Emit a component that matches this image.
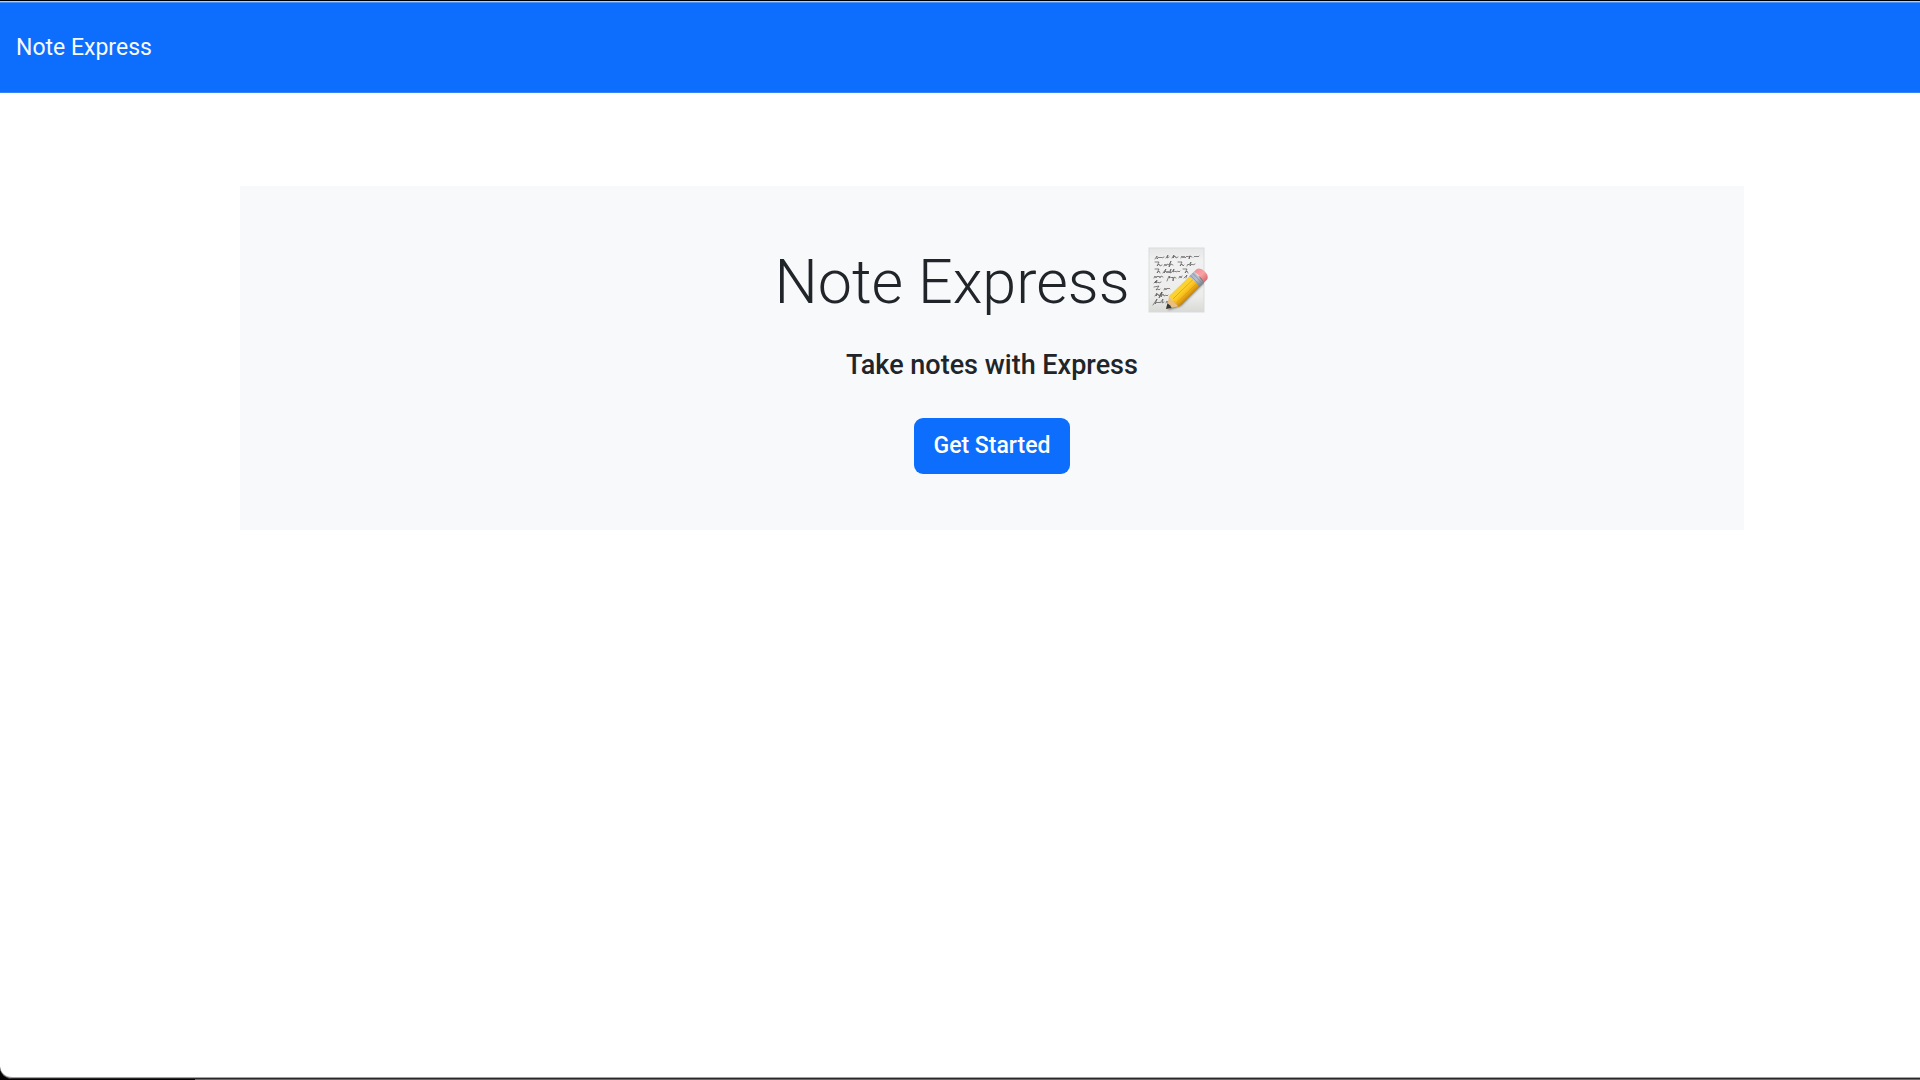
<svelte:head>
  <title>Note Express</title>
</svelte:head>

<div class="window">
  <div class="page">
    <header class="navbar">
      <nav aria-label="Main"><a class="brand" href="/">Note Express</a></nav>
    </header>
    <main>
      <section class="hero">
        <h1>
          <span>Note Express</span>
          <svg class="memo" viewBox="0 0 64 72" role="img" aria-label="Memo">
            <defs>
              <linearGradient id="paper" x1="0" y1="0" x2="0" y2="1">
                <stop offset="0" stop-color="#e6e6e6" />
                <stop offset=".2" stop-color="#f1f1f1" />
                <stop offset=".75" stop-color="#ececeb" />
                <stop offset="1" stop-color="#d9d9d6" />
              </linearGradient>
              <linearGradient id="barrel" x1="0" y1="0" x2="0" y2="1">
                <stop offset="0" stop-color="#f7cf3c" />
                <stop offset=".35" stop-color="#ffd42a" />
                <stop offset=".65" stop-color="#f5b81c" />
                <stop offset="1" stop-color="#c98609" />
              </linearGradient>
              <linearGradient id="metal" x1="0" y1="0" x2="0" y2="1">
                <stop offset="0" stop-color="#a9b6ca" />
                <stop offset=".5" stop-color="#b9c0ca" />
                <stop offset="1" stop-color="#7c8088" />
              </linearGradient>
              <linearGradient id="rubber" x1="0" y1="0" x2="0" y2="1">
                <stop offset="0" stop-color="#f48f96" />
                <stop offset=".5" stop-color="#f7a3a6" />
                <stop offset="1" stop-color="#d9686f" />
              </linearGradient>
              <filter id="shade" x="-20%" y="-50%" width="140%" height="200%">
                <feGaussianBlur stdDeviation="1.3" />
              </filter>
              <clipPath id="sheet"><rect x="3" y="4" width="55" height="64" /></clipPath>
            </defs>
            <rect x="3" y="4" width="55" height="64" fill="url(#paper)" stroke="#dadbdc" stroke-width="1" />
            <g fill="none" stroke="#555" stroke-width="0.7" stroke-linecap="round" stroke-linejoin="round">
              <path d="M9 15l2-3 0 3 2-2 1 1 1-1 1 1 2-1M20 14l2-3-1 3 2-1M26 14l2-3-1 3 2-2 1 2 2-1M35 14l1-2 1 2 1-2 1 2 2-2 1 1 2-1-1 3 1-3 2 1M48 13l1-1 1 1 1-1 1 1 1-1" />
              <path d="M9 18l4 0-2 4 2-2 1 2 2-1M18 22l1-2 1 2 1-2 2 1 2-4-2 6 2-3 2 1M32 18l4 0-2 4 2-2 1 2 1-1M41 22l1-2 1 1 2-3-1 4 2-2 1 1 2-1" />
              <path d="M9 25l4 0-2 4 2-2 1 2M17 29l3-4-2 4 2-2 1 2 1-2 1 2 2-4-1 4 2-1 2-3-1 3 2-1 1 1 2-1 1 1 1-1M37 25l4 0-2 4 2-2 1 2" />
              <path d="M8 34l1-2 1 2 1-2 1 1 1-1 1 2 1-2 2 1M21 37l2-5 1 1-1 1 2-1 1 1 1-1 0 4 1-4 2 1M33 34l1-2 1 2 1-2M38 34l3-3-1 3" />
              <path d="M8 39l2-2-1 2 2-3-1 3 2-1 1 1 2-1" />
              <path d="M8 43l5-1-3 4 2-1 1 1 1-1M18 46l1-2 1 2 1-2 1 1 1-1 1 1" />
              <path d="M9 52l2-3-1 3 2-2 1 2 3-4-3 6 3-6-1 5 2-3 1 2 2-1 1 1 1-1M39 52l3-2 1 1 2-1" />
              <path d="M7 61l4-6-2 5 2-2 1 1 1-1 1 1 3-4-1 4 2-1M20 59l1-2 1 2 2-1" />
            </g>
            <g clip-path="url(#sheet)">
              <path d="M22 66L35 62 63 34 56 30 25 58z" fill="#333" opacity=".65" filter="url(#shade)" />
            </g>
            <g transform="translate(20 65) rotate(-44) scale(1 1.2)">
              <path d="M0 0L11-5.7V5.7z" fill="#e9bf82" />
              <path d="M0 0L5-2.6Q6 0 5 2.6z" fill="#34383a" />
              <path d="M10-5.8Q13-6.3 14-6H40V6H14Q12 6.3 10 5.8 12 4 10 2 12 0 10-2 12-4 10-5.8z" fill="url(#barrel)" />
              <path d="M12-2H40M12 2.5H40" stroke="#dba10f" stroke-width=".7" />
              <path d="M39-6.2H46V6.2H39Q41 0 39-6.2z" fill="url(#metal)" />
              <path d="M41-6V6M44-6V6" stroke="#868c96" stroke-width=".6" />
              <path d="M46-6.2H50Q54-5 54 0T50 6.2H46Q48 0 46-6.2z" fill="url(#rubber)" />
            </g>
          </svg>
        </h1>
        <p>Take notes with Express</p>
        <button type="button">Get Started</button>
      </section>
    </main>
  </div>
</div>

<style>
  :global(body) {
    background: #fff;
  }

  .window {
    box-sizing: border-box;
    min-height: 100vh;
    display: flex;
    flex-direction: column;
    padding-bottom: 1px;
    background: linear-gradient(90deg, #050304 195px, #6a6869 195px);
    font-family: Roboto, "Liberation Sans", sans-serif;
    color: #212529;
  }

  .page {
    flex: 1;
    border-top: 1px solid #000;
    border-bottom: 1px solid #2b292a;
    border-bottom-left-radius: 12px;
    background: #fff;
    box-shadow: inset 0 -1px #a3a2a3;
  }

  .navbar {
    display: flex;
    align-items: center;
    min-height: 91px;
    padding: 0 16px;
    border-top: 1px solid #b4cdf5;
    background: #0d6efd;
    box-shadow: inset 0 1px #4a90fb, inset 0 -1px #3384fd;
  }

  .brand {
    color: #f8f9fa;
    font-size: 23px;
    line-height: 36px;
    text-decoration: none;
  }

  main {
    padding: 93px 176px 93px 240px;
  }

  .hero {
    display: flex;
    flex-direction: column;
    align-items: center;
    padding: 56px;
    background: #f8f9fb;
  }

  h1 {
    display: flex;
    align-items: flex-start;
    gap: 16px;
    margin: 0;
    font-size: 61px;
    font-weight: 300;
    line-height: 80px;
  }

  .memo {
    width: 64px;
    height: 72px;
    margin-top: 2px;
  }

  p {
    margin: 25px 0 35px;
    font-size: 27px;
    font-weight: 500;
    line-height: 36px;
  }

  button {
    padding: 10px 20px;
    border: 0;
    border-radius: 9px;
    background: #0d6efd;
    color: #fff;
    font: 500 23px/36px Roboto, "Liberation Sans", sans-serif;
    cursor: pointer;
  }
</style>
